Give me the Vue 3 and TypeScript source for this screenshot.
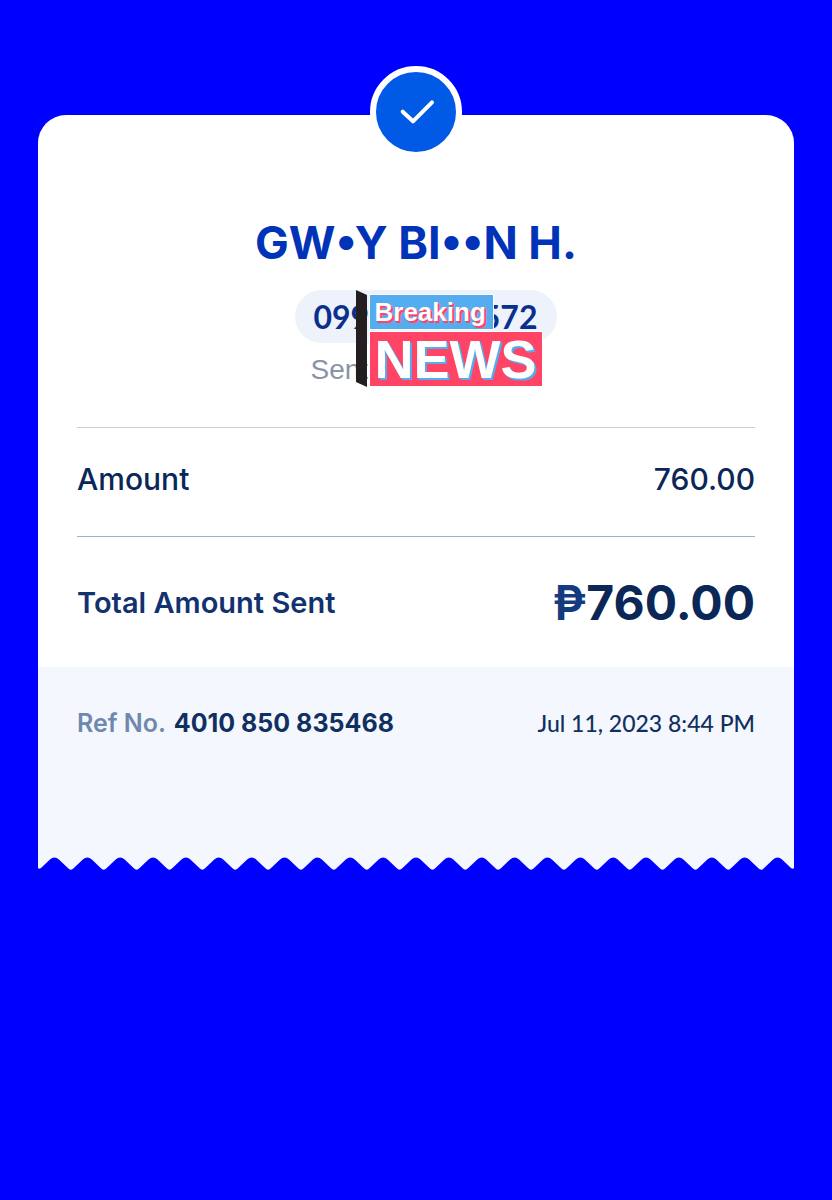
<script setup lang="ts">
interface Receipt {
  recipient: string
  phoneStart: string
  phoneEnd: string
  amount: string
  currency: string
  total: string
  reference: string
  date: string
}

const receipt: Receipt = {
  recipient: 'GW•Y BI••N H.',
  phoneStart: '099',
  phoneEnd: '572',
  amount: '760.00',
  currency: '₱',
  total: '760.00',
  reference: '4010 850 835468',
  date: 'Jul 11, 2023 8:44 PM',
}

// Torn paper edge: rounded teeth drawn in a 33-unit period.
const teeth = 23
const period = 33
const edgeWidth = teeth * period

function tornEdge(): string {
  let d = 'M0 0V11Q1 12.500 3 11'
  for (let i = 0; i < teeth; i++) {
    const x = i * period
    d += `L${x + 12} 2.500Q${x + 16.5} -1.500 ${x + 21} 2.500`
    if (i < teeth - 1) {
      d += `L${x + 30} 11Q${x + 33} 14.500 ${x + 36} 11`
    }
  }
  return d + `L${edgeWidth - 3} 11Q${edgeWidth - 1} 12.500 ${edgeWidth} 11V0Z`
}

const edgePath = tornEdge()
</script>

<template>
  <main class="page">
    <article class="receipt">
      <div class="badge">
        <svg class="check" viewBox="0 0 38 28" role="img" aria-label="Success">
          <path d="M5.700 13.700L16 23.300L35 4.300" />
        </svg>
      </div>

      <div class="body">
        <header class="head">
          <h1 class="name">{{ receipt.recipient }}</h1>
          <div class="contact">
            <p class="phone">
              <span>{{ receipt.phoneStart }}</span>
              <span>{{ receipt.phoneEnd }}</span>
            </p>
            <p class="via">Sent</p>
            <div class="sticker">
              <svg class="spine" viewBox="0 0 11 97" aria-hidden="true">
                <path d="M0 0L11 5V97L0 92Z" />
              </svg>
              <div class="panels">
                <span class="breaking">Breaking</span>
                <span class="news">NEWS</span>
              </div>
            </div>
          </div>
        </header>

        <dl class="lines">
          <div class="line">
            <dt>Amount</dt>
            <dd>{{ receipt.amount }}</dd>
          </div>
          <div class="line line-total">
            <dt>Total Amount Sent</dt>
            <dd><span class="currency">{{ receipt.currency }}</span>{{ receipt.total }}</dd>
          </div>
        </dl>
      </div>

      <footer class="foot">
        <p class="ref">Ref No. <strong>{{ receipt.reference }}</strong></p>
        <time class="date" datetime="2023-07-11T20:44">{{ receipt.date }}</time>
      </footer>
      <svg class="edge" :viewBox="`0 0 ${edgeWidth} 13`" preserveAspectRatio="none" aria-hidden="true">
        <path :d="edgePath" />
      </svg>
    </article>
  </main>
</template>

<style>
body {
  margin: 0;
  background: #0000ff;
}
</style>

<style scoped>
.page {
  box-sizing: border-box;
  min-height: 100vh;
  padding: 115px 38px 40px;
  background: #0000ff;
  color: #0a2757;
  font-family: Inter, "Liberation Sans", sans-serif;
}

h1,
p,
dl,
dd {
  margin: 0;
}

.receipt {
  position: relative;
}

.badge {
  position: absolute;
  top: -49px;
  left: 50%;
  display: flex;
  align-items: center;
  justify-content: center;
  width: 80px;
  height: 80px;
  border: 6px solid #fff;
  border-radius: 50%;
  background: #005ae6;
  transform: translateX(-50%);
}

.check {
  width: 38px;
  height: 28px;
}

.check path {
  fill: none;
  stroke: #fff;
  stroke-width: 4;
  stroke-linecap: round;
  stroke-linejoin: round;
}

.body {
  padding: 100px 39px 0;
  border-radius: 28px 28px 0 0;
  background: #fff;
}

.head {
  display: flex;
  flex-direction: column;
  align-items: center;
  padding-bottom: 40px;
}

.name {
  color: #0033b8;
  font-size: 45px;
  font-weight: 700;
  line-height: 55px;
  white-space: nowrap;
}

.contact {
  position: relative;
  margin-top: 20px;
  padding-left: 19px;
}

.phone {
  display: flex;
  justify-content: space-between;
  box-sizing: border-box;
  width: 262px;
  padding: 0 19px;
  border-radius: 27px;
  background: #edf2fb;
  color: #0a2f8c;
  font-family: Lato, "Liberation Sans", sans-serif;
  font-size: 32px;
  font-weight: 700;
  line-height: 53px;
}

.via {
  padding: 10px 16px 0;
  color: #8b93a6;
  font-family: "Liberation Sans", sans-serif;
  font-size: 28px;
  line-height: 34px;
}

.sticker {
  position: absolute;
  top: 0;
  left: 80px;
  display: flex;
  gap: 2px;
}

.spine {
  width: 11px;
  height: 97px;
  fill: #231f20;
}

.panels {
  display: flex;
  flex-direction: column;
  align-items: flex-start;
  gap: 1px;
  padding-top: 4px;
  color: #fff;
  font-family: "Liberation Sans", sans-serif;
  font-weight: 700;
}

.breaking,
.news {
  border: 1px solid #fff;
}

.breaking {
  padding: 0 7px 0 5px;
  background: #55acee;
  font-size: 26px;
  line-height: 34px;
  text-shadow: 1px 1px #ff4466, 2px 2px #ff4466;
}

.news {
  padding: 0 5px;
  background: #ff4466;
  font-size: 54px;
  line-height: 54px;
  text-shadow: 1px 1px #55acee, 2px 2px #55acee;
}

.line {
  display: flex;
  align-items: center;
  justify-content: space-between;
  height: 101px;
  padding-bottom: 7px;
  border-top: 1px solid #c9d1da;
  font-size: 30px;
  font-weight: 500;
}

.line-total {
  height: 130px;
  padding-bottom: 0;
  border-color: #a3b3c6;
}

.line-total dt {
  color: #12326f;
  font-size: 29px;
  font-weight: 600;
}

.line-total dd {
  font-size: 48px;
  font-weight: 700;
}

.line-total .currency {
  color: #143a80;
  font-weight: 600;
}

.foot {
  display: flex;
  align-items: flex-start;
  justify-content: space-between;
  box-sizing: border-box;
  min-height: 190px;
  padding: 40px 39px 0;
  background: #f4f8fe;
  line-height: 32px;
}

.ref {
  color: #7088ae;
  font-size: 25px;
  font-weight: 600;
}

.ref strong {
  margin-left: 2px;
  color: #12305f;
  font-weight: 700;
}

.date {
  color: #12305f;
  font-family: Lato, "Liberation Sans", sans-serif;
  font-size: 23px;
  font-weight: 500;
}

.edge {
  display: block;
  width: 100%;
  height: 13px;
  fill: #f4f8fe;
}
</style>
